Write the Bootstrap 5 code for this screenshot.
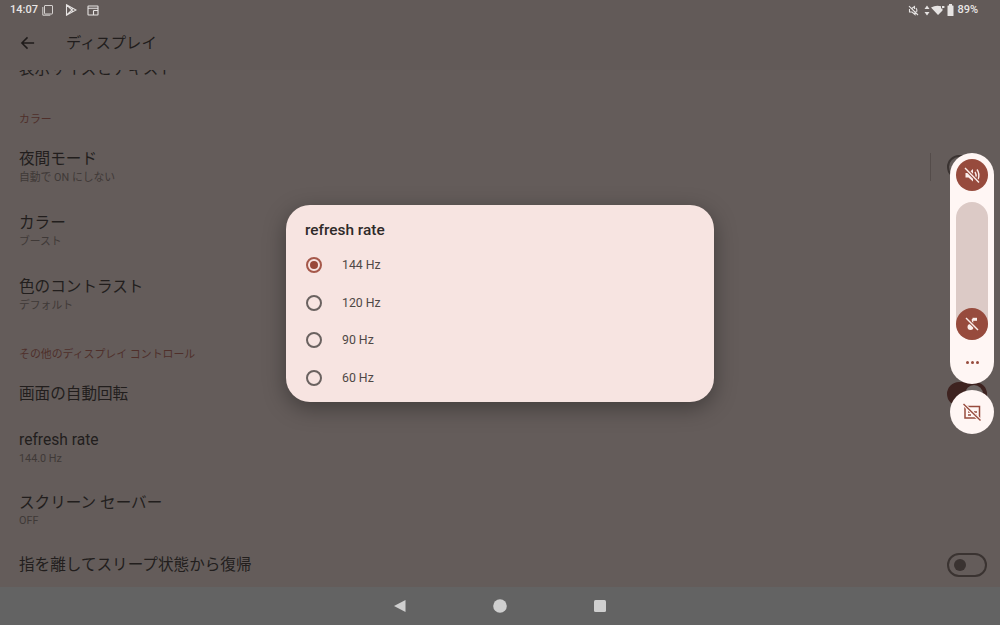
<!DOCTYPE html>
<html lang="ja">
<head>
<meta charset="utf-8">
<title>ディスプレイ</title>
<link href="https://cdn.jsdelivr.net/npm/bootstrap@5.3.0/dist/css/bootstrap.min.css" rel="stylesheet">
<style>
html,body{height:100%;margin:0}
body{font-family:Roboto,"Noto Sans CJK JP",sans-serif;background:#645c5a;color:#221e1d;overflow:hidden}
.screen{height:625px;width:1000px;position:relative;overflow:hidden}
.head-zone{background:#625a58;height:70px;flex:none;position:relative;z-index:1}
.stat-row{height:20px;padding:0 22px 0 10px;color:#e9e6e5;font-size:11px;font-weight:500}
.stat-row svg{display:block}
.bar-row{height:46px;padding-left:20px;gap:30px}
.bar-title{font-size:15.3px;line-height:1;color:#211d1c;margin-top:2px}
.list-zone{flex:1;overflow:hidden;min-height:0}
.list-shift{margin-top:-24px}
.set-item{height:64px;padding:0 13px 0 19px}
.set-item.single{height:46px}
.set-item.tight-a{height:62px}
.set-item.tight-b{height:63px}
.tight-b .set-sub{margin-top:1px}
.set-title{font-size:15.6px;line-height:20px;color:#221e1d}
.set-sub{font-size:10.8px;line-height:14px;color:#3f3937;margin-top:2px}
.sect{font-size:10.9px;color:#4f2f2a;padding-left:19px;line-height:14px}
.sect-a{margin-top:21px;height:22px}
.sect-b{margin-top:21px;height:23px}
.night-rule{width:1px;height:28px;background:#544c4a;display:block}
.flip{width:40px;height:24px;border:2px solid #3a3331;border-radius:12px;flex:none;position:relative}
.flip-dot{width:12px;height:12px;border-radius:50%;background:#3a3331;position:absolute;left:5px;top:4px}
.flip.on{background:#3e2320;border-color:#3e2320}
.flip.on .flip-dot{left:auto;right:2px;top:1px;width:18px;height:18px;background:#6f6866}
.nav-zone{height:38px;flex:none;background:#636363;gap:86px}
.dlg{position:absolute;left:286px;top:205px;width:428px;height:197px;background:#f7e4e1;border-radius:24px;box-shadow:0 6px 22px rgba(0,0,0,.35);padding:16px 19px 0;z-index:3}
.dlg-title{font-size:15.4px;font-weight:500;line-height:18px;color:#2f2a29;margin-bottom:7.500px}
.opt{height:37.500px;gap:20px;font-size:12.300px;color:#4f4846}
.dial{width:16px;height:16px;border:2px solid #6a6260;border-radius:50%;flex:none;margin-left:1px;position:relative}
.dial.sel{border-color:#a5584a}
.dial.sel::after{content:"";position:absolute;left:2px;top:2px;width:8px;height:8px;border-radius:50%;background:#99493a}
.vol{position:absolute;left:950px;top:153px;width:44px;height:231px;border-radius:22px;background:#fff6f4;z-index:3;padding-top:6px}
.vol-btn{width:32px;height:32px;border-radius:50%;background:#974b3d}
.vol-track{position:relative;width:32px;height:138px;border-radius:16px;background:#dccac6;margin-top:11px}
.vol-low{position:absolute;left:0;bottom:0}
.vol-more{margin-top:21px;gap:2px}
.vol-more i{width:3px;height:3px;border-radius:50%;background:#974b3d;display:block}
.cap{position:absolute;left:950px;top:390px;width:44px;height:44px;border-radius:50%;background:#fff6f4;z-index:3}
.st-a{gap:4px}.st-a .b1{margin-left:8px}.st-a .b2{margin-left:6px}
.st-b .b3{margin-left:5px}.st-b .b4{margin-left:1px}.st-b .b5{margin-left:2px}.st-b .b6{margin-left:3px}
</style>
</head>
<body>
<div class="screen d-flex flex-column">
  <div class="head-zone">
    <div class="stat-row d-flex align-items-center justify-content-between">
      <div class="st-a d-flex align-items-center">
        <span>14:07</span>
        <svg width="11" height="12" viewBox="0 0 11 12" fill="none" stroke="#d6d2d0" stroke-width="1"><rect x="2.500" y="1.500" width="8" height="8.500" rx=".5"/><path d="M.8 3v8.200h7.500"/></svg>
        <svg class="b1" width="12" height="12" viewBox="0 0 12 12" fill="none" stroke="#e6e3e2" stroke-width="1.100"><path d="M1.500 .8 11 6 1.500 11.200zM1.500 .8 7 6 1.500 11.200M7.500 4 7 6l.5 2"/></svg>
        <svg class="b2" width="12" height="11" viewBox="0 0 12 11" fill="none" stroke="#e6e3e2" stroke-width="1.100"><rect x="1" y="1" width="10" height="9" rx=".5"/><path d="M1 3.200h10M6.500 5.500h4.500M6.500 5.500V10"/></svg>
      </div>
      <div class="st-b d-flex align-items-center">
        <svg width="11" height="11" viewBox="0 0 11 11" fill="none" stroke="#e6e3e2" stroke-width="1.100"><path d="M1 1.200 10 10M1.500 4v3H4l3 2.500V6M4 3.200 6.500 1.500v2.500M8 3c1 1.200 1 3 .6 4"/></svg>
        <svg class="b3" width="6" height="11" viewBox="0 0 6 11" fill="#e6e3e2"><path d="M3 .5 5.500 4h-5zM3 10.500.5 7h5z"/></svg>
        <svg class="b4" width="14" height="11" viewBox="0 0 14 11" fill="#e6e3e2"><path d="M0 2.500Q5-.2 10 1.300V3.500h1.500V5.500L7 10z"/><rect x="11" y="1" width="2.400" height="2"/></svg>
        <svg class="b5" width="7" height="12" viewBox="0 0 7 12" fill="#e6e3e2"><rect x="2" y="0" width="3" height="2"/><rect x=".5" y="1.500" width="6" height="10.500" rx=".5"/></svg>
        <span class="b6">89%</span>
      </div>
    </div>
    <div class="bar-row d-flex align-items-center">
      <svg width="16" height="16" viewBox="0 0 17 17" fill="none" stroke="#1f1b1a" stroke-width="1.600"><path d="M15 8.500H2.500M8 2.500 2 8.500l6 6"/></svg>
      <span class="bar-title">ディスプレイ</span>
    </div>
  </div>

  <div class="list-zone">
    <div class="list-shift">
      <div class="set-item single d-flex align-items-center"><div class="set-title">表示サイズとテキスト</div></div>
      <div class="sect sect-a">カラー</div>
      <div class="set-item d-flex align-items-center justify-content-between">
        <div><div class="set-title">夜間モード</div><div class="set-sub">自動で ON にしない</div></div>
        <div class="d-flex align-items-center gap-3"><span class="night-rule"></span><div class="flip"><div class="flip-dot"></div></div></div>
      </div>
      <div class="set-item d-flex align-items-center"><div><div class="set-title">カラー</div><div class="set-sub">ブースト</div></div></div>
      <div class="set-item d-flex align-items-center"><div><div class="set-title">色のコントラスト</div><div class="set-sub">デフォルト</div></div></div>
      <div class="sect sect-b">その他のディスプレイ コントロール</div>
      <div class="set-item single d-flex align-items-center justify-content-between">
        <div class="set-title">画面の自動回転</div>
        <div class="flip on"><div class="flip-dot"></div></div>
      </div>
      <div class="set-item tight-a d-flex align-items-center"><div><div class="set-title">refresh rate</div><div class="set-sub">144.0 Hz</div></div></div>
      <div class="set-item tight-b d-flex align-items-center"><div><div class="set-title">スクリーン セーバー</div><div class="set-sub">OFF</div></div></div>
      <div class="set-item single d-flex align-items-center justify-content-between">
        <div class="set-title">指を離してスリープ状態から復帰</div>
        <div class="flip"><div class="flip-dot"></div></div>
      </div>
    </div>
  </div>

  <div class="nav-zone d-flex align-items-center justify-content-center">
    <svg width="14" height="14" viewBox="0 0 14 14" fill="#cfcfcf"><path d="M1 7 12.500 1v12z"/></svg>
    <svg width="14" height="14" viewBox="0 0 14 14" fill="#cfcfcf"><circle cx="7" cy="7" r="6.800"/></svg>
    <svg width="14" height="14" viewBox="0 0 14 14" fill="#cfcfcf"><rect x="1" y="1" width="12" height="12" rx="1.500"/></svg>
  </div>

  <div class="dlg">
    <div class="dlg-title">refresh rate</div>
    <div class="opt d-flex align-items-center"><span class="dial sel"></span><span>144 Hz</span></div>
    <div class="opt d-flex align-items-center"><span class="dial"></span><span>120 Hz</span></div>
    <div class="opt d-flex align-items-center"><span class="dial"></span><span>90 Hz</span></div>
    <div class="opt d-flex align-items-center"><span class="dial"></span><span>60 Hz</span></div>
  </div>

  <div class="vol d-flex flex-column align-items-center">
    <div class="vol-btn d-flex align-items-center justify-content-center">
      <svg width="20" height="20" viewBox="0 0 20 20" fill="none">
        <path d="M3.500 8v4.500h3l4.500 4V4L6.500 8z" fill="#fbeeeb"/>
        <path d="M13 7c1.200 1.800 1.200 4 .6 5.500M15 4.500c2.200 3 2.200 7 1 10" stroke="#fbeeeb" stroke-width="1.400"/>
        <path d="M3 3 17 17.500" stroke="#974b3d" stroke-width="3.400"/>
        <path d="M3 3 17 17.500" stroke="#fbeeeb" stroke-width="1.400"/>
      </svg>
    </div>
    <div class="vol-track">
      <div class="vol-btn vol-low d-flex align-items-center justify-content-center">
        <svg width="20" height="20" viewBox="0 0 20 20" fill="none">
          <path d="M10.500 5v8" stroke="#fbeeeb" stroke-width="1.500"/>
          <path d="M10.500 3.800h4.500v3h-4.500z" fill="#fbeeeb"/>
          <circle cx="8.500" cy="13" r="3" fill="#fbeeeb"/>
          <path d="M4 4 16 16" stroke="#974b3d" stroke-width="3.200"/>
          <path d="M4 4 16 16" stroke="#fbeeeb" stroke-width="1.400"/>
        </svg>
      </div>
    </div>
    <div class="vol-more d-flex"><i></i><i></i><i></i></div>
  </div>

  <div class="cap d-flex align-items-center justify-content-center">
    <svg width="20" height="20" viewBox="0 0 20 20" fill="none">
      <path d="M3 4.500h14.500V16H3z" stroke="#974b3d" stroke-width="1.500"/>
      <path d="M6 10h4M6 13h3M11.500 13h3.500M12 10h3" stroke="#974b3d" stroke-width="1.500"/>
      <path d="M1.500 2 18.500 18.500" stroke="#fff6f4" stroke-width="3.400"/>
      <path d="M1.500 2 18.500 18.500" stroke="#974b3d" stroke-width="1.400"/>
    </svg>
  </div>
</div>
</body>
</html>
